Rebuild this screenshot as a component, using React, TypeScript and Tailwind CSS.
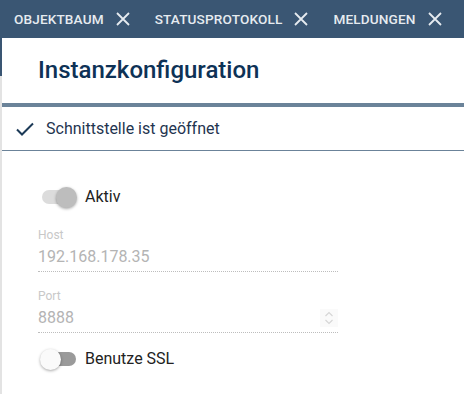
import React from "react";

const tabs = ["Objektbaum", "Statusprotokoll", "Meldungen"];

const CloseIcon = () => (
  <svg width="14" height="14" viewBox="0 0 14 14" className="shrink-0">
    <path d="M1 1 L13 13 M13 1 L1 13" stroke="#e6ebf0" strokeWidth="1.8" />
  </svg>
);

const Toggle: React.FC<{ on: boolean; disabled?: boolean }> = ({ on, disabled }) => (
  <div className="relative w-[37px] h-[21px] flex items-center shrink-0">
    <div
      className={`w-[34px] h-[14px] rounded-full mx-auto ${
        disabled ? "bg-[#dcdcdc]" : "bg-[#9a9a9a]"
      }`}
    ></div>
    <div
      className={`absolute top-0 w-[21px] h-[21px] rounded-full shadow-[0_1px_3px_rgba(0,0,0,0.35)] ${
        on ? "right-0" : "left-0"
      } ${disabled ? "bg-[#bdbdbd]" : "bg-[#fafafa]"}`}
    ></div>
  </div>
);

const Field: React.FC<{ label: string; value: string; spinner?: boolean }> = ({
  label,
  value,
  spinner,
}) => (
  <div className="w-[300px] flex flex-col">
    <span className="text-[12px] leading-[14px] text-[#c8c8c8]">{label}</span>
    <div className="flex items-center justify-between h-[24px] mt-[3px]">
      <span className="text-[16px] text-[#b4b4b4]">{value}</span>
      {spinner && (
        <div className="w-[18px] h-[18px] bg-[#fafafa] flex items-center justify-center">
          <svg width="10" height="14" viewBox="0 0 10 14">
            <path d="M1.5 5 L5 1.5 L8.5 5 M1.5 9 L5 12.5 L8.5 9" stroke="#d6d6d6" strokeWidth="1.2" fill="none" />
          </svg>
        </div>
      )}
    </div>
    <div className="mt-[2px] border-b border-dotted border-[#bdbdbd]"></div>
  </div>
);

export default function App() {
  return (
    <div className="w-[464px] h-[394px] bg-white flex flex-col overflow-hidden font-['Roboto',sans-serif]">
      {/* Tab bar */}
      <div className="h-[38px] bg-[#3a5673] flex items-center pl-[14px] gap-[25px] shrink-0">
        {tabs.map((t) => (
          <div key={t} className="flex items-center gap-[12px]">
            <span className="text-[13.6px] font-medium uppercase text-[#e6ebf0] tracking-[0.01em]">{t}</span>
            <CloseIcon />
          </div>
        ))}
      </div>

      <div className="flex flex-1">
        {/* left edge */}
        <div className="w-[2px] flex flex-col shrink-0">
          <div className="h-[38px] bg-[#3a5673]"></div>
          <div className="flex-1 bg-[#e3e3e3]"></div>
        </div>

        <div className="flex-1 flex flex-col">
          <div className="h-[65px] flex items-center pl-[36px] pb-[2px]">
            <h1 className="text-[24px] font-medium text-[#0e3256]">Instanzkonfiguration</h1>
          </div>
          <div className="h-[4px] bg-[#6b8399]"></div>
          <div className="h-[44px] flex items-center pl-[13px] gap-[11px] border-b border-[#6b8399]">
            <svg width="20" height="16" viewBox="0 0 20 16">
              <path d="M2 8.5 L7 13.5 L18 2.5" stroke="#1c3a57" strokeWidth="2" fill="none" />
            </svg>
            <span className="text-[16px] text-[#1f3550]">Schnittstelle ist geöffnet</span>
          </div>

          <div className="flex flex-col pl-[36px] pt-[35px]">
            <div className="flex items-center gap-[8px] h-[22px]">
              <div className="pl-[2px]">
                <Toggle on disabled />
              </div>
              <span className="text-[16px] text-[#222]">Aktiv</span>
            </div>
            <div className="mt-[20px]">
              <Field label="Host" value="192.168.178.35" />
            </div>
            <div className="mt-[17px]">
              <Field label="Port" value="8888" spinner />
            </div>
            <div className="flex items-center gap-[8px] h-[22px] mt-[15px]">
              <div className="pl-[2px]">
                <Toggle on={false} />
              </div>
              <span className="text-[16px] text-[#222]">Benutze SSL</span>
            </div>
          </div>
        </div>
      </div>
    </div>
  );
}
